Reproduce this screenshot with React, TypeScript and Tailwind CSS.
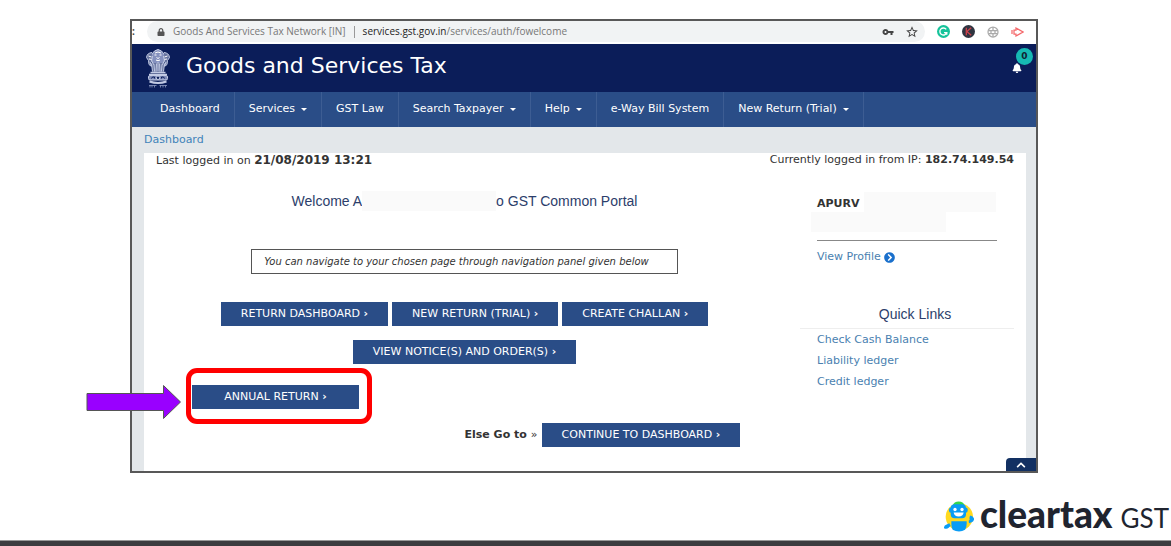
import React from "react";
import { FaBell, FaChevronCircleRight, FaLock, FaChevronUp } from "react-icons/fa";
import { MdStarBorder, MdVpnKey } from "react-icons/md";

const navItems = [
  { label: "Dashboard", caret: false },
  { label: "Services", caret: true },
  { label: "GST Law", caret: false },
  { label: "Search Taxpayer", caret: true },
  { label: "Help", caret: true },
  { label: "e-Way Bill System", caret: false },
  { label: "New Return (Trial)", caret: true },
];

const quickLinks = ["Check Cash Balance", "Liability ledger", "Credit ledger"];

function Emblem() {
  return (
    <svg viewBox="0 0 48 78" className="h-[39px] w-6" fill="none" stroke="#c3cbe4" strokeWidth="2" aria-hidden="true">
      <path d="M17 4q7-6 14 0l5 6q5 8 0 15l-4 7H16l-4-7q-5-7 0-15z" fill="#8591be" />
      <path d="M12 7Q2 8 1 17l4 6 1 8 5 4M36 7q10 1 11 10l-4 6-1 8-5 4" fill="#66739f" />
      <path d="M18 8q6-4 12 0M17 12h4M27 12h4M21 17l3 2 3-2M20 22q4 3 8 0M5 14l6 2M43 14l-6 2M6 20l6 1M42 20l-6 1" stroke="#fff" />
      <path d="M11 28h26l-2 18H13z" fill="#66739f" stroke="none" />
      <path d="M13 14l-2 10 5 8M35 14l2 10-5 8M8 26l3 8M40 26l-3 8" />
      <path d="M11 29l2 16M16 31l1 14M21 29l-1 16M27 29l1 16M32 31l-1 14M37 29l-2 16M24 26v18" />
      <path d="M9 47h30M6 51h36" strokeWidth="3" />
      <rect x="5" y="53" width="38" height="9" rx="3" fill="#7f8bb8" />
      <circle cx="24" cy="57.500" r="3.500" fill="#0b1d59" />
      <path d="M11 59l2-3h4v3M31 59v-3h4l2 3" stroke="#0b1d59" />
      <path d="M7 65q17 6 34 0" strokeWidth="4" />
      <path d="M6 73h15M27 73h15M8 73v4M12 73v4M17 73v4M29 73v4M34 73v4M39 73v4" strokeWidth="1.500" stroke="#97a3ca" />
    </svg>
  );
}

function Caret() {
  return (
    <svg viewBox="0 0 6 3" className="h-[3px] w-[6px]" aria-hidden="true">
      <path d="M0 0h6L3 3z" fill="#fff" />
    </svg>
  );
}

function Robot() {
  return (
    <svg viewBox="0 0 90 92" className="h-[31px] w-[30px]" aria-hidden="true">
      <circle cx="46" cy="47" r="41" fill="#ffd91f" />
      <path d="M26 13Q30 1 44 1t18 12z" fill="#36d64b" />
      <rect x="20" y="9" width="46" height="42" rx="12" fill="#0a9cf5" />
      <rect x="15" y="19" width="56" height="16" rx="6" fill="#0a9cf5" />
      <circle cx="33" cy="25" r="5" fill="#fff" />
      <circle cx="54" cy="25" r="5" fill="#fff" />
      <path d="M29 34h30q-2 12-15 12T29 34z" fill="#fff" />
      <path d="M22 60h46v8q0 12-5 18-8 5-18 5t-19-5q-4-6-4-18z" fill="#0a9cf5" />
      <path d="M16 66l-8 4q-9 3-8 11 8 4 14-1l6-6zM74 59l3-3q-2-11 3-13 12 5 10 13-1 7-9 8l-6 2z" fill="#0a9cf5" />
    </svg>
  );
}

function PortalButton({ children, className = "px-5" }: { children: React.ReactNode; className?: string }) {
  return (
    <button type="button" className={"h-6 bg-[#2a4d87] text-[11px] whitespace-nowrap text-white " + className}>
      {children} <span className="font-bold">›</span>
    </button>
  );
}

function AddressBar() {
  return (
    <div className="flex h-[23px] items-start bg-white pr-3 font-['Open_Sans',sans-serif] text-[10px] text-[#777]">
      <span className="w-[15px] leading-5 font-bold text-[#444]">:</span>
      <div className="flex h-[21px] flex-1 items-center rounded-full bg-[#f1f3f4] pr-[6px] pl-[10px]">
        <FaLock className="mr-2 size-[8px] text-[#555]" />
        <span>Goods And Services Tax Network [IN]</span>
        <span className="mx-2 h-3 w-px bg-[#999]" />
        <span className="flex-1">
          <span className="text-[#222]">services.gst.gov.in</span>/services/auth/fowelcome
        </span>
        <MdVpnKey className="mr-[11px] size-[12px] text-[#444]" />
        <MdStarBorder className="size-[14px] text-[#444]" />
      </div>
      <div className="ml-3 flex h-[21px] items-center gap-3">
        <svg viewBox="0 0 24 24" className="size-[13px]" aria-hidden="true">
          <circle cx="12" cy="12" r="12" fill="#15c39a" />
          <path d="M17 8a6.500 6.500 0 1 0 1 6h-5M18 14v4" fill="none" stroke="#fff" strokeWidth="2.500" />
        </svg>
        <svg viewBox="0 0 24 24" className="size-[13px]" aria-hidden="true">
          <circle cx="12" cy="12" r="12" fill="#2f3440" />
          <path d="M8 5v14M17 5l-8 7 8 7" fill="none" stroke="#c8404a" strokeWidth="2.500" />
        </svg>
        <svg viewBox="0 0 24 24" className="size-[12px]" fill="none" stroke="#aaa" strokeWidth="2.500" aria-hidden="true">
          <circle cx="12" cy="12" r="10" />
          <path d="M3 9h18M3 15h18M12 2v7M12 15v7M8 9v6M16 9v6" />
        </svg>
        <svg viewBox="0 0 26 20" className="h-[10px] w-[13px]" fill="none" stroke="#f4696b" strokeWidth="2.500" aria-hidden="true">
          <path d="M10 6V2l14 8-14 8v-4H6V6zM2 6v8" />
        </svg>
      </div>
    </div>
  );
}

export default function App() {
  return (
    <div className="flex min-h-screen flex-col bg-white font-['DejaVu_Sans',sans-serif] text-[11px] text-[#333]">
      <div className="mt-[19px] mr-[133px] ml-[130px] border-2 border-[#585858]">
        <AddressBar />
        <header className="flex h-12 items-center bg-[#0b1d59] pl-[14px]">
          <Emblem />
          <h1 className="ml-4 flex-1 pb-[6px] text-[22px] text-white">Goods and Services Tax</h1>
          <button type="button" aria-label="Notifications" className="relative mr-[14px] text-white">
            <FaBell className="size-[10px]" />
            <span className="absolute -top-[15px] left-1 flex size-[17px] items-center justify-center rounded-full bg-[#16b9b3] text-[9px] font-bold text-[#123]">
              0
            </span>
          </button>
        </header>
        <nav className="flex h-[35px] bg-[#2a4d87] pl-[14px] text-white">
          {navItems.map((item) => (
            <a key={item.label} href="#" className="flex items-center gap-[6px] border-r border-[#3d5d93] px-[14px] whitespace-nowrap">
              {item.label}
              {item.caret && <Caret />}
            </a>
          ))}
        </nav>
        <div className="relative bg-[#e3e7ea] pr-[10px] pl-3">
          <div className="h-[26px] leading-[26px]">
            <a href="#" className="text-[#4183b9]">Dashboard</a>
          </div>
          <main className="bg-white">
            <div className="flex h-[15px] items-center justify-between px-3">
              <p>
                Last logged in on <b className="text-[12px]">21/08/2019 13:21</b>
              </p>
              <p>
                Currently logged in from IP: <b>182.74.149.54</b>
              </p>
            </div>
            <div className="flex">
              <section className="flex flex-1 flex-col items-center pt-[23px] pb-6">
                <h2 className="flex items-center font-['Liberation_Sans',sans-serif] text-[14px] leading-5 text-[#2c3e6b]">
                  Welcome A
                  <span className="h-5 w-[134px] bg-[#fafafa]" />o GST Common Portal
                </h2>
                <p className="mt-[38px] flex h-[25px] items-center border border-[#555] pr-7 pl-3 text-[10px] whitespace-nowrap italic">
                  You can navigate to your chosen page through navigation panel given below
                </p>
                <div className="mt-7 flex gap-1">
                  <PortalButton>RETURN DASHBOARD</PortalButton>
                  <PortalButton>NEW RETURN (TRIAL)</PortalButton>
                  <PortalButton>CREATE CHALLAN</PortalButton>
                </div>
                <div className="mt-[14px]">
                  <PortalButton>VIEW NOTICE(S) AND ORDER(S)</PortalButton>
                </div>
                <div className="relative mt-[21px] ml-12 self-start">
                  <PortalButton className="w-[167px]">ANNUAL RETURN</PortalButton>
                  <span className="absolute -top-[17px] -left-[6px] h-[56px] w-[186px] rounded-[11px] border-[5px] border-[#ff0000]" />
                  <svg viewBox="0 0 96 36" className="absolute -top-[1px] -left-[106px] h-9 w-24" aria-hidden="true">
                    <path d="M1 9.500H77.500V1.500L94.500 18 77.500 34.500V26.500H1z" fill="#9900ff" stroke="#555" />
                  </svg>
                </div>
                <div className="mt-[14px] ml-[50%] flex items-center gap-1 self-start whitespace-nowrap">
                  <b>Else Go to</b>
                  <span>»</span>
                  <PortalButton>CONTINUE TO DASHBOARD</PortalButton>
                </div>
              </section>
              <aside className="w-[241px] pt-6 pr-3 pl-[15px]">
                <div className="flex h-5 items-end pr-[18px] pl-[17px]">
                  <b>APURV</b>
                  <span className="ml-1 h-5 flex-1 bg-[#fafafa]" />
                </div>
                <div className="ml-[11px] h-5 w-[135px] bg-[#fafafa]" />
                <div className="mt-2 mr-[17px] ml-[17px] border-t border-[#888] pt-2">
                  <a href="#" className="flex items-center gap-[3px] leading-4 text-[#4a7fb0]">
                    View Profile <FaChevronCircleRight className="size-[11px] text-[#1a70cc]" />
                  </a>
                </div>
                <h3 className="mt-[39px] border-b border-[#eee] pb-1 pl-4 text-center font-['Liberation_Sans',sans-serif] text-[14px] leading-5 text-[#2c3e6b]">
                  Quick Links
                </h3>
                <ul className="pl-[17px] leading-[21px]">
                  {quickLinks.map((link) => (
                    <li key={link}>
                      <a href="#" className="text-[#4a7fb0]">{link}</a>
                    </li>
                  ))}
                </ul>
              </aside>
            </div>
          </main>
          <button type="button" aria-label="Back to top" className="absolute right-0 bottom-0 flex h-[13px] w-[30px] items-center justify-center rounded-tl-sm bg-[#123062] text-white">
            <FaChevronUp className="size-[10px]" />
          </button>
        </div>
      </div>
      <footer className="mt-auto">
        <div className="mb-2 flex items-end justify-end pr-[2px] font-['Lato',sans-serif] text-[#20242f]">
          <Robot />
          <div className="ml-[6px] flex items-baseline gap-2 leading-[28px]">
            <span className="text-[37px] font-black">cleartax</span>
            <span className="text-[26px]">GST</span>
          </div>
        </div>
        <div className="h-[6px] border-t border-[#999] bg-[#3c3c3f]" />
      </footer>
    </div>
  );
}
